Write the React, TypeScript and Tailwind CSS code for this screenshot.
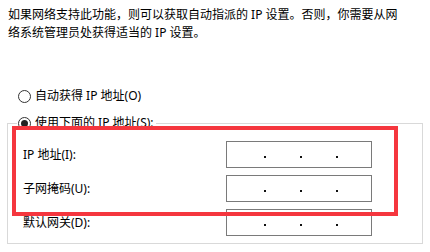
const Radio = ({ checked }: { checked?: boolean }) => (
  <span className="w-[13px] h-[13px] rounded-full border border-[#333] bg-white flex items-center justify-center shrink-0">
    {checked && <span className="w-[7px] h-[7px] rounded-full bg-[#222]" />}
  </span>
);

const IpBox = () => (
  <div className="w-[146px] h-[27px] border border-[#7a7a7a] bg-white flex items-start pt-[14px] pl-[37px] gap-[34px]">
    <span className="w-[2px] h-[2px] bg-[#111]" />
    <span className="w-[2px] h-[2px] bg-[#111]" />
    <span className="w-[2px] h-[2px] bg-[#111]" />
  </div>
);

const rows = ["IP 地址(I):", "子网掩码(U):", "默认网关(D):"];

export default function App() {
  return (
    <div className="relative w-[430px] h-[252px] bg-white overflow-hidden text-black text-[12px] font-['Noto_Sans','Noto_Sans_CJK_SC',sans-serif]">
      <p className="pt-[6px] pl-[8px] leading-[18px] whitespace-nowrap">
        如果网络支持此功能，则可以获取自动指派的 IP 设置。否则，你需要从网
        <br />
        络系统管理员处获得适当的 IP 设置。
      </p>

      <div className="mt-[46px] pl-[18px] h-[16px] flex items-center gap-[4px] leading-[16px]">
        <Radio />
        <span>自动获得 IP 地址(O)</span>
      </div>

      <div className="mt-[19px] ml-[7px] w-[416px] h-[121px] border border-[#d9d9d9]">
        <div className="-mt-[9px] ml-[9px] h-[16px] w-fit flex items-center gap-[4px] bg-white pl-[1px] pr-[2px] leading-[16px]">
          <Radio checked />
          <span>使用下面的 IP 地址(S):</span>
        </div>
        <div className="mt-[10px] flex flex-col gap-[7px]">
          {rows.map((r) => (
            <div key={r} className="h-[27px] flex items-center pl-[15px]">
              <span className="w-[203px]">{r}</span>
              <IpBox />
            </div>
          ))}
        </div>
      </div>

      <div className="absolute left-[12px] top-[126px] w-[386px] h-[90px] border-[4px] border-[#f5363e]" />
    </div>
  );
}
